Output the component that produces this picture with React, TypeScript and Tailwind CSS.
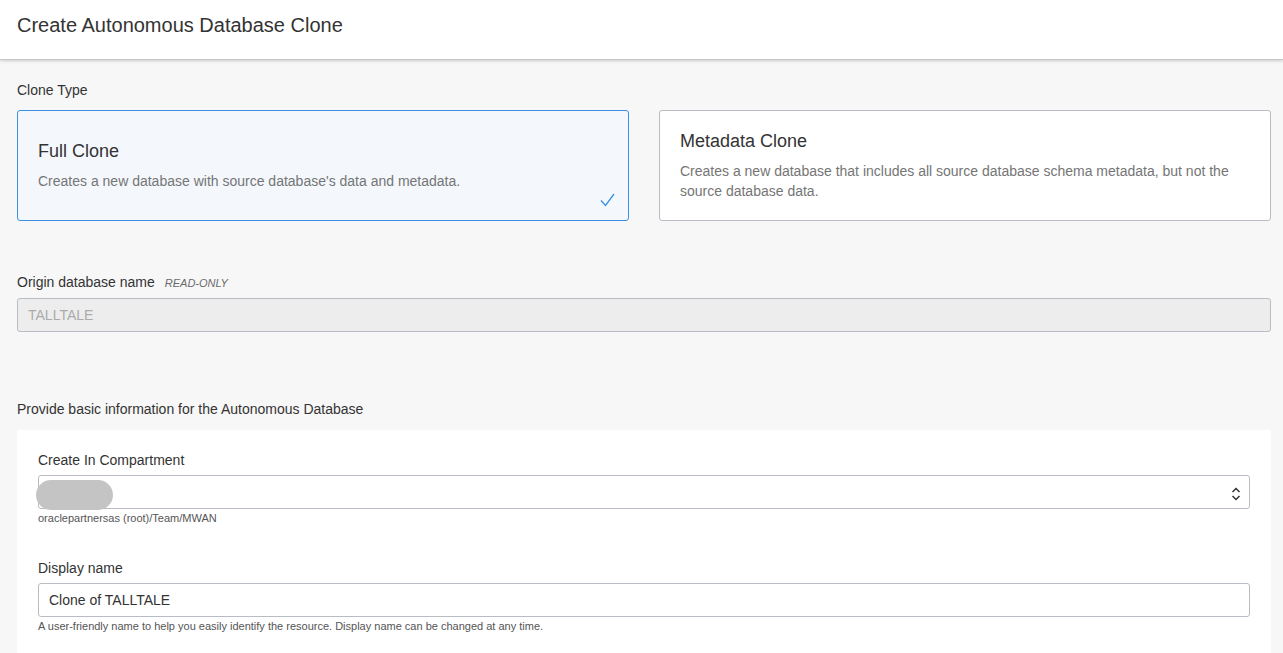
import React from "react";

export default function App() {
  return (
    <div
      className="min-h-[653px] w-full bg-[#f7f7f7] text-[#333]"
      style={{ fontFamily: '"Liberation Sans", Arial, sans-serif' }}
    >
      <header className="h-[60px] bg-white border-b border-[#c8c8c8] shadow-[0_1px_3px_rgba(0,0,0,0.18)] px-[17px] pt-[13px]">
        <h1 className="text-[20px] leading-[24px] text-[#333]">Create Autonomous Database Clone</h1>
      </header>

      <main className="pl-[17px] pt-5 pr-[12px]">
        <div className="text-[14px] leading-[20px] mb-[10px]">Clone Type</div>
        <div className="flex gap-[30px]">
          <div className="relative flex-1 h-[111px] rounded-[3px] border border-[#3c8fe3] bg-[#f4f8fd] px-5 flex items-center">
            <div className="-mt-[1px]">
              <div className="text-[18px] leading-[24px] text-[#333]">Full Clone</div>
              <div className="mt-2 text-[14px] leading-[20px] text-[#757575]">
                Creates a new database with source database's data and metadata.
              </div>
            </div>
            <svg
              className="absolute right-[13px] bottom-[13px]"
              width="15"
              height="14"
              viewBox="0 0 15 14"
              fill="none"
            >
              <path d="M1 7.5 L5.5 12.5 L14 1" stroke="#3c8fe3" strokeWidth="1.3" />
            </svg>
          </div>
          <div className="flex-1 h-[111px] rounded-[3px] border border-[#b8bcc3] bg-white px-5 flex items-center">
            <div className="-mt-[1px]">
              <div className="text-[18px] leading-[24px] text-[#333]">Metadata Clone</div>
              <div className="mt-2 text-[14px] leading-[20px] text-[#757575]">
                Creates a new database that includes all source database schema metadata, but not the source database data.
              </div>
            </div>
          </div>
        </div>

        <div className="mt-[51px] flex items-baseline">
          <span className="text-[14px] leading-[20px]">Origin database name</span>
          <span className="ml-[10px] text-[11px] italic text-[#6b6b6b]">READ-ONLY</span>
        </div>
        <div className="mt-[6px] h-[34px] rounded-[3px] border border-[#b8bcc3] bg-[#ededed] px-[10px] flex items-center text-[14px] text-[#ababab]">
          TALLTALE
        </div>

        <div className="mt-[67px] text-[14px] leading-[20px]">
          Provide basic information for the Autonomous Database
        </div>

        <div className="mt-[11px] bg-white pl-[21px] pr-[21px] pt-5 pb-8">
          <div className="text-[14px] leading-[20px]">Create In Compartment</div>
          <div className="relative mt-[5px] h-[34px] rounded-[3px] border border-[#b8bcc3] bg-white">
            <div className="absolute left-[-3px] top-[4px] h-[30px] w-[77px] rounded-full bg-[#c4c4c4]" />
            <svg
              className="absolute right-[8px] top-[11px]"
              width="10"
              height="14"
              viewBox="0 0 10 14"
              fill="none"
            >
              <path d="M1.5 5 L5 1.5 L8.5 5" stroke="#333" strokeWidth="1.5" />
              <path d="M1.5 9 L5 12.5 L8.5 9" stroke="#333" strokeWidth="1.5" />
            </svg>
          </div>
          <div className="mt-[2px] text-[11px] leading-[14px] text-[#555]">
            oraclepartnersas (root)/Team/MWAN
          </div>

          <div className="mt-[33px] text-[14px] leading-[20px]">Display name</div>
          <div className="mt-[5px] h-[34px] rounded-[3px] border border-[#b8bcc3] bg-white px-[10px] flex items-center text-[14px] text-[#333]">
            Clone of TALLTALE
          </div>
          <div className="mt-[2px] text-[11px] leading-[14px] text-[#555]">
            A user-friendly name to help you easily identify the resource. Display name can be changed at any time.
          </div>
        </div>
      </main>
    </div>
  );
}
